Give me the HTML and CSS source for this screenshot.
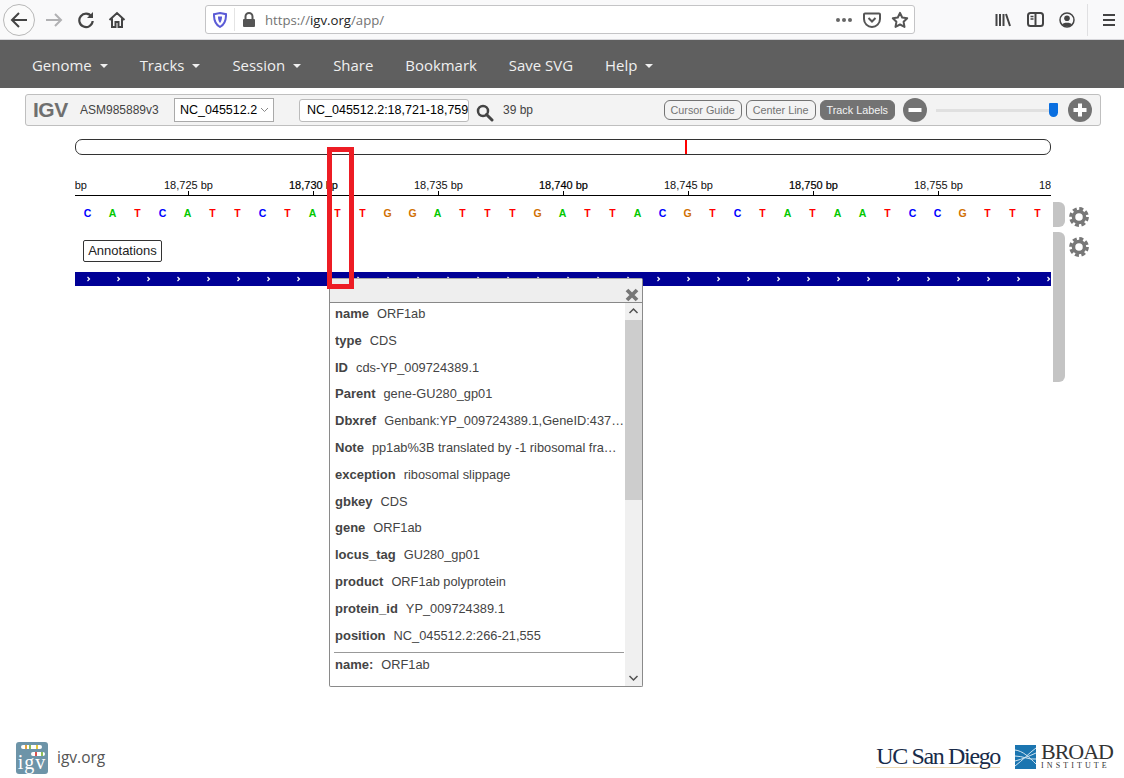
FILE: index.html
```html
<!DOCTYPE html>
<html lang="en">
<head>
    <meta charset="UTF-8">
    <meta name="viewport" content="width=device-width, initial-scale=1.0">
    <title>IGV-Web</title>
    <link rel="stylesheet" href="styles.css">
</head>
<body>
    <!-- browser chrome -->
    <div class="chrome">
        <div class="back-btn">
            <svg width="20" height="20" viewBox="0 0 20 20"><path d="M18 10H3M10 3l-7 7 7 7" fill="none" stroke="#444" stroke-width="2"/></svg>
        </div>
        <svg class="chrome-icon forward" width="18" height="18" viewBox="0 0 18 18"><path d="M1 9h15M10 3l6 6-6 6" fill="none" stroke="#b1b1b3" stroke-width="2"/></svg>
        <svg class="chrome-icon reload" width="18" height="18" viewBox="0 0 18 18"><path d="M14.5 5.5A6.7 6.7 0 1 0 15.7 10" fill="none" stroke="#444" stroke-width="2.2"/><path d="M16 1v6h-6z" fill="#444"/></svg>
        <svg class="chrome-icon home" width="18" height="18" viewBox="0 0 18 18"><path d="M1.5 9L9 2l7.500 7M4 7.500V16h3.500v-5h3v5H14V7.500" fill="none" stroke="#444" stroke-width="2"/></svg>
        <div class="urlbar">
            <svg class="shield" width="14" height="16" viewBox="0 0 14 16"><path d="M1 2.200L7 1l6 1.200c.2 6-1.500 10.300-6 12.800C2.500 12.500.8 8.200 1 2.200z" fill="none" stroke="#5b5bd6" stroke-width="2"/><path d="M5 4.500h4c0 3-.6 5-2 6.500-1.400-1.500-2-3.500-2-6.500z" fill="#5b5bd6"/></svg>
            <span class="url-sep"></span>
            <svg class="lock" width="14" height="16" viewBox="0 0 14 16"><path d="M3.500 7V4.500a3.500 3.500 0 0 1 7 0V7" fill="none" stroke="#555" stroke-width="2"/><rect x="1" y="7" width="12" height="8" rx="1" fill="#555"/></svg>
            <span class="url"><span class="url-dim">https://</span>igv.org<span class="url-dim">/app/</span></span>
            <span class="dots"><i></i><i></i><i></i></span>
            <svg class="pocket" width="18" height="16" viewBox="0 0 18 16"><path d="M2 1.500h14a1 1 0 0 1 1 1V7a8 8 0 0 1-16 0V2.500a1 1 0 0 1 1-1z" fill="none" stroke="#555" stroke-width="2"/><path d="M5.500 6L9 9.500 12.500 6" fill="none" stroke="#555" stroke-width="2"/></svg>
            <svg class="star" width="18" height="18" viewBox="0 0 18 18"><path d="M9 1.800l2.200 4.700 5 .7-3.600 3.600.9 5.100L9 13.500l-4.500 2.400.9-5.100L1.800 7.200l5-.7z" fill="none" stroke="#555" stroke-width="2" stroke-linejoin="round"/></svg>
        </div>
        <svg class="library" width="16" height="16" viewBox="0 0 16 16"><path d="M1.500 2v12M5 2v12M8.500 2v12M11 2l4 12" fill="none" stroke="#444" stroke-width="2"/></svg>
        <svg class="sidebar" width="17" height="15" viewBox="0 0 17 15"><rect x="1" y="1" width="15" height="13" rx="2.500" fill="none" stroke="#444" stroke-width="2"/><path d="M8.500 1v13" stroke="#444" stroke-width="2"/><path d="M3.500 4.500h3M3.500 7h3" stroke="#444" stroke-width="1.500"/></svg>
        <svg class="profile" width="16" height="16" viewBox="0 0 16 16"><circle cx="8" cy="8" r="7" fill="none" stroke="#444" stroke-width="1.500"/><circle cx="8" cy="6.200" r="2.800" fill="#444"/><path d="M3 12.500c1-2.500 9-2.500 10 0-2.500 2.500-7.500 2.500-10 0z" fill="#444"/></svg>
        <span class="chrome-sep"></span>
        <div class="hamburger"><i></i><i></i><i></i></div>
    </div>

    <!-- igv-webapp nav -->
    <nav class="navbar">
        <a class="nav-item caret">Genome</a>
        <a class="nav-item caret">Tracks</a>
        <a class="nav-item caret">Session</a>
        <a class="nav-item">Share</a>
        <a class="nav-item">Bookmark</a>
        <a class="nav-item">Save SVG</a>
        <a class="nav-item caret">Help</a>
    </nav>

    <main class="igv-main">
        <div class="igv-toolbar">
            <span class="igv-logo">IGV</span>
            <span class="genome-id">ASM985889v3</span>
            <div class="chrom-select"><span>NC_045512.2</span>
                <svg width="9" height="6" viewBox="0 0 9 6"><path d="M1 1l3.500 3.500L8 1" fill="none" stroke="#888" stroke-width="1"/></svg>
            </div>
            <div class="locus-input">NC_045512.2:18,721-18,759</div>
            <svg class="search" width="18" height="18" viewBox="0 0 18 18"><circle cx="7" cy="7" r="5" fill="none" stroke="#444" stroke-width="2.500"/><path d="M10.500 10.500L16 16" stroke="#444" stroke-width="3" stroke-linecap="round"/></svg>
            <span class="window-size">39 bp</span>
            <div class="toolbar-right">
                <button class="tb-btn">Cursor Guide</button>
                <button class="tb-btn">Center Line</button>
                <button class="tb-btn on">Track Labels</button>
                <svg class="zoom-btn" width="24" height="24" viewBox="0 0 24 24"><circle cx="12" cy="12" r="12" fill="#737373"/><path d="M5.500 12h13" stroke="#fff" stroke-width="4"/></svg>
                <div class="zoom-slider"><span class="zoom-thumb"></span></div>
                <svg class="zoom-btn" width="24" height="24" viewBox="0 0 24 24"><circle cx="12" cy="12" r="12" fill="#737373"/><path d="M5.500 12h13M12 5.500v13" stroke="#fff" stroke-width="4"/></svg>
            </div>
        </div>

        <div class="overview"><span class="overview-mark"></span></div>

        <svg class="ruler" width="976" height="22" viewBox="0 0 976 22">
            <g class="ruler-labels">
                <text x="-37" y="14">18,720 bp</text>
                <text x="89" y="14">18,725 bp</text>
                <text x="214" y="14" class="dark">18,730 bp</text>
                <text x="339" y="14">18,735 bp</text>
                <text x="464" y="14" class="dark">18,740 bp</text>
                <text x="589" y="14">18,745 bp</text>
                <text x="714" y="14" class="dark">18,750 bp</text>
                <text x="839" y="14">18,755 bp</text>
                <text x="964" y="14">18,760 bp</text>
            </g>
            <path d="M0 20.500H976M113.500 16v4M238.500 16v4M363.500 16v4M488.500 16v4M613.500 16v4M738.500 16v4M863.500 16v4" stroke="#000" fill="none"/>
        </svg>

        <div class="track-row seq-row">
            <div class="track-view seq">
                <b class="c">C</b><b class="a">A</b><b class="t">T</b><b class="c">C</b><b class="a">A</b><b class="t">T</b><b class="t">T</b><b class="c">C</b><b class="t">T</b><b class="a">A</b>
                <b class="t">T</b><b class="t">T</b><b class="g">G</b><b class="g">G</b><b class="a">A</b><b class="t">T</b><b class="t">T</b><b class="t">T</b><b class="g">G</b><b class="a">A</b>
                <b class="t">T</b><b class="t">T</b><b class="a">A</b><b class="c">C</b><b class="g">G</b><b class="t">T</b><b class="c">C</b><b class="t">T</b><b class="a">A</b><b class="t">T</b>
                <b class="a">A</b><b class="a">A</b><b class="t">T</b><b class="c">C</b><b class="c">C</b><b class="g">G</b><b class="t">T</b><b class="t">T</b><b class="t">T</b>
            </div>
            <div class="track-handle"></div>
            <svg class="gear" width="20" height="20" viewBox="0 0 20 20"><circle cx="10" cy="10" r="8.300" fill="none" stroke="#777" stroke-width="3.200" stroke-dasharray="4 2.520"/><circle cx="10" cy="10" r="5.500" fill="none" stroke="#777" stroke-width="3.500"/></svg>
        </div>

        <div class="track-row annot-row">
            <div class="track-view annot">
                <span class="track-label">Annotations</span>
                <svg class="feature" width="976" height="14" viewBox="0 0 976 14">
                    <defs>
                        <pattern id="chevrons" x="12" y="0" width="30" height="14" patternUnits="userSpaceOnUse">
                            <path d="M0.500 5l2 2-2 2" fill="none" stroke="#fff" stroke-width="1.200"/>
                        </pattern>
                    </defs>
                    <rect width="976" height="14" fill="#000096"/>
                    <rect width="976" height="14" fill="url(#chevrons)"/>
                </svg>
            </div>
            <div class="track-handle"></div>
            <svg class="gear" width="20" height="20" viewBox="0 0 20 20"><circle cx="10" cy="10" r="8.300" fill="none" stroke="#777" stroke-width="3.200" stroke-dasharray="4 2.520"/><circle cx="10" cy="10" r="5.500" fill="none" stroke="#777" stroke-width="3.500"/></svg>
        </div>

        <!-- feature popup -->
        <div class="popup">
            <div class="popup-head">
                <svg width="14" height="14" viewBox="0 0 14 14"><path d="M2 2l10 10M12 2L2 12" stroke="#777" stroke-width="3.800"/></svg>
            </div>
            <div class="popup-body">
                <div class="popup-list">
                    <div class="pop-row"><b>name</b>ORF1ab</div>
                    <div class="pop-row"><b>type</b>CDS</div>
                    <div class="pop-row"><b>ID</b>cds-YP_009724389.1</div>
                    <div class="pop-row"><b>Parent</b>gene-GU280_gp01</div>
                    <div class="pop-row"><b>Dbxref</b>Genbank:YP_009724389.1,GeneID:43740578</div>
                    <div class="pop-row"><b>Note</b>pp1ab%3B translated by -1 ribosomal frameshift</div>
                    <div class="pop-row"><b>exception</b>ribosomal slippage</div>
                    <div class="pop-row"><b>gbkey</b>CDS</div>
                    <div class="pop-row"><b>gene</b>ORF1ab</div>
                    <div class="pop-row"><b>locus_tag</b>GU280_gp01</div>
                    <div class="pop-row"><b>product</b>ORF1ab polyprotein</div>
                    <div class="pop-row"><b>protein_id</b>YP_009724389.1</div>
                    <div class="pop-row"><b>position</b>NC_045512.2:266-21,555</div>
                    <hr class="pop-rule">
                    <div class="pop-row"><b>name:</b>ORF1ab</div>
                    <div class="pop-row"><b>type:</b>CDS</div>
                </div>
                <div class="pop-scroll">
                    <svg class="pop-arrow" width="17" height="17" viewBox="0 0 17 17"><path d="M4.500 10l4-4 4 4" fill="none" stroke="#505050" stroke-width="1.500"/></svg>
                    <span class="pop-thumb"></span>
                    <svg class="pop-arrow end" width="17" height="17" viewBox="0 0 17 17"><path d="M4.500 7l4 4 4-4" fill="none" stroke="#505050" stroke-width="1.500"/></svg>
                </div>
            </div>
        </div>

        <!-- hand drawn highlight from the screenshot -->
        <div class="highlight"></div>
    </main>

    <footer class="footer">
        <div class="igv-link">
            <svg width="32" height="32" viewBox="0 0 32 32">
                <rect width="32" height="32" rx="3" fill="#6d94a8"/>
                <rect x="5" y="3" width="21" height="4" rx="2" fill="#fff"/>
                <rect x="9" y="3" width="2" height="4" fill="#e8a33d"/>
                <rect x="13" y="3" width="2" height="4" fill="#8fbf5a"/>
                <rect x="20" y="3" width="2" height="4" fill="#e6c93c"/>
                <rect x="15" y="10" width="14" height="4" rx="2" fill="#fff"/>
                <rect x="19" y="10" width="2" height="4" fill="#d9534f"/>
                <rect x="25" y="10" width="2" height="4" fill="#8fbf5a"/>
                <text x="16" y="27" text-anchor="middle" class="logo-igv">igv</text>
            </svg>
            <span>igv.org</span>
        </div>
        <div class="partners">
            <span class="ucsd">UC San Diego</span>
            <svg class="broad-mark" width="21" height="24" viewBox="0 0 21 24">
                <rect width="21" height="24" fill="#1b75b0"/>
                <path d="M0 5c8 1 14 7 21 14M0 11c8 0 14 4 21 3M0 16c8-2 14-5 21-8M0 21C8 15 14 8 21 3" fill="none" stroke="#cfe3f0" stroke-width="1"/>
            </svg>
            <div class="broad">
                <span class="broad-name">BROAD</span>
                <span class="broad-sub">INSTITUTE</span>
            </div>
        </div>
    </footer>
</body>
</html>
```

FILE: styles.css
```css
html, body {
    margin: 0;
    height: 778px;
    overflow: hidden;
}
body {
    display: flex;
    flex-direction: column;
    font-family: "Liberation Sans", Arial, sans-serif;
    background-color: #fff;
    color: #444;
}

/* browser chrome */
.chrome {
    display: flex;
    align-items: center;
    height: 39px;
    flex: none;
    background-color: #f9f9fa;
    border-bottom: 1px solid #d7d7db;
}
.back-btn {
    display: flex;
    align-items: center;
    justify-content: center;
    width: 32px;
    height: 32px;
    margin-left: 3px;
    border: 1px solid #b8b8b8;
    border-radius: 50%;
    background-color: #fbfbfb;
    box-sizing: border-box;
}
.chrome-icon {
    flex: none;
}
.forward {
    margin-left: 10px;
}
.reload {
    margin-left: 14px;
}
.home {
    margin-left: 13px;
}
.urlbar {
    display: flex;
    align-items: center;
    width: 710px;
    height: 29px;
    margin-left: 79px;
    box-sizing: border-box;
    background-color: #fff;
    border: 1px solid #c4c4c6;
    border-radius: 3px;
}
.shield {
    margin-left: 7px;
}
.url-sep {
    width: 1px;
    height: 23px;
    margin-left: 7px;
    background-color: #e4e4e4;
}
.lock {
    margin-left: 7px;
}
.url {
    margin-left: 9px;
    font-family: "Open Sans", sans-serif;
    font-size: 13.200px;
    color: #222;
    flex: 1;
}
.url-dim {
    color: #737373;
}
.dots {
    display: flex;
    gap: 2px;
}
.dots i {
    width: 4px;
    height: 4px;
    border-radius: 50%;
    background-color: #666;
}
.pocket {
    margin-left: 11px;
}
.star {
    margin-left: 10px;
    margin-right: 5px;
}
.library {
    margin-left: 80px;
}
.sidebar {
    margin-left: 16px;
}
.profile {
    margin-left: 15px;
}
.chrome-sep {
    width: 1px;
    height: 32px;
    margin-left: 12px;
    background-color: #e0e0e2;
}
.hamburger {
    display: flex;
    flex-direction: column;
    gap: 3px;
    margin-left: 15px;
}
.hamburger i {
    display: block;
    width: 12px;
    height: 2px;
    background-color: #444;
}

/* navbar */
.navbar {
    display: flex;
    align-items: center;
    gap: 32px;
    height: 46px;
    flex: none;
    padding: 2px 0 0 32px;
    background-color: #5f5f5f;
}
.nav-item {
    font-family: "Open Sans", sans-serif;
    font-size: 14.950px;
    color: #f0f0f0;
}
.caret::after {
    content: "";
    display: inline-block;
    margin-left: 8px;
    vertical-align: 3px;
    border-top: 4px solid #f0f0f0;
    border-left: 4px solid transparent;
    border-right: 4px solid transparent;
}

/* igv */
.igv-main {
    position: relative;
    flex: 1;
}
.igv-toolbar {
    display: flex;
    align-items: center;
    width: 1076px;
    height: 32px;
    margin: 6px 0 0 25px;
    padding-left: 7px;
    box-sizing: border-box;
    background-color: #f3f3f3;
    border: 1px solid #bfbfbf;
    border-radius: 3px;
}
.igv-logo {
    width: 47px;
    font-size: 21px;
    font-weight: bold;
    letter-spacing: -0.500px;
    color: #6f6f6f;
}
.genome-id {
    width: 94px;
    font-size: 12px;
    color: #444;
}
.chrom-select {
    display: flex;
    align-items: center;
    justify-content: space-between;
    width: 100px;
    height: 24px;
    padding: 0 4px 0 5px;
    box-sizing: border-box;
    background-color: #fff;
    border: 1px solid #a9a9a9;
    font-size: 12.500px;
    color: #000;
}
.locus-input {
    width: 170px;
    height: 23px;
    margin-left: 25px;
    padding-left: 7px;
    box-sizing: border-box;
    overflow: hidden;
    white-space: nowrap;
    background-color: #fff;
    border: 1px solid #bbb;
    border-radius: 3px;
    font-size: 12.500px;
    line-height: 21px;
    color: #000;
}
.search {
    margin: 5px 0 0 7px;
}
.window-size {
    margin-left: 9px;
    font-size: 12px;
    color: #444;
}
.toolbar-right {
    display: flex;
    align-items: center;
    margin-left: auto;
    margin-right: 8px;
}
.tb-btn {
    height: 20px;
    margin: 0 4px 0 0;
    padding: 0 6px;
    font-family: "Liberation Sans", Arial, sans-serif;
    font-size: 10.800px;
    color: #737373;
    background-color: #f3f3f3;
    border: 1px solid #737373;
    border-radius: 6px;
}
.tb-btn.on {
    color: #f3f3f3;
    background-color: #737373;
    margin-right: 8px;
}
.zoom-btn {
    flex: none;
}
.zoom-slider {
    position: relative;
    width: 122px;
    height: 3px;
    margin: 0 10px 0 9px;
    background-color: #e0e0e0;
}
.zoom-thumb {
    position: absolute;
    right: 0;
    top: -6px;
    width: 9px;
    height: 14px;
    background-color: #0a6fe0;
    border-radius: 1px 1px 5px 5px;
}

.overview {
    position: relative;
    width: 976px;
    height: 16px;
    margin: 13px 0 0 75px;
    box-sizing: border-box;
    background-color: #fff;
    border: 1px solid #333;
    border-radius: 7px;
}
.overview-mark {
    position: absolute;
    left: 609px;
    top: 0;
    width: 2px;
    height: 14px;
    background-color: #f00;
}
.ruler {
    display: block;
    margin: 20px 0 0 75px;
}
.ruler-labels text {
    font-size: 11px;
    fill: #111;
}
.ruler-labels .dark {
    fill: #000;
    stroke: #000;
    stroke-width: 0.200px;
}

.track-row {
    display: flex;
    margin-left: 75px;
}
.track-view {
    width: 976px;
    flex: none;
    overflow: hidden;
}
.track-handle {
    width: 12px;
    flex: none;
    margin-left: 2px;
    background-color: #c4c4c4;
    border-radius: 0 6px 6px 0;
}
.gear {
    margin: 5px 0 0 4px;
}
.seq-row {
    height: 25px;
    margin-top: 5px;
}
.annot-row {
    height: 150px;
    margin-top: 5px;
}
.seq {
    display: flex;
}
.seq b {
    width: 25px;
    flex: none;
    text-align: center;
    font-size: 10.500px;
    line-height: 22px;
}
.a { color: #00c800; }
.c { color: #0000ff; }
.g { color: #d17105; }
.t { color: #ff0000; }

.track-label {
    display: block;
    width: 79px;
    height: 22px;
    margin: 8px 0 0 8px;
    box-sizing: border-box;
    border: 1px solid #333;
    border-radius: 2px;
    background-color: #fff;
    font-size: 13px;
    line-height: 20px;
    text-align: center;
    color: #222;
}
.feature {
    display: block;
    margin-top: 10px;
}

/* popup */
.popup {
    position: absolute;
    left: 329px;
    top: 190px;
    width: 314px;
    height: 409px;
    box-sizing: border-box;
    display: flex;
    flex-direction: column;
    background-color: #fff;
    border: 1px solid #8a8a8a;
    border-top-color: #aaa;
    border-radius: 2px;
}
.popup-head {
    display: flex;
    justify-content: flex-end;
    align-items: flex-end;
    height: 23px;
    flex: none;
    padding-right: 3px;
    background-color: #eee;
    border-bottom: 1px solid #888;
}
.popup-body {
    display: flex;
    flex: 1;
    min-height: 0;
}
.popup-list {
    width: 295px;
    flex: none;
    overflow: hidden;
    padding: 1px 0 0 5px;
    box-sizing: border-box;
}
.pop-row {
    height: 26.800px;
    overflow: hidden;
    white-space: nowrap;
    text-overflow: ellipsis;
    width: 290px;
    font-size: 12.800px;
    line-height: 19px;
    color: #444;
}
.pop-row b {
    margin-right: 8px;
    font-size: 13px;
}
.pop-rule {
    width: 290px;
    height: 0;
    margin: 0 0 2px -1px;
    border: 0;
    border-top: 1px solid #999;
}
.pop-scroll {
    display: flex;
    flex-direction: column;
    width: 17px;
    flex: none;
    background-color: #f0f0f0;
}
.pop-thumb {
    display: block;
    height: 180px;
    background-color: #cdcdcd;
}
.pop-arrow.end {
    margin-top: auto;
}

.highlight {
    position: absolute;
    left: 327px;
    top: 59px;
    width: 27px;
    height: 142px;
    box-sizing: border-box;
    border: 5px solid #ed1c24;
}

/* footer */
.footer {
    display: flex;
    justify-content: space-between;
    align-items: center;
    height: 32px;
    flex: none;
    padding: 0 14px 4px 16px;
}
.igv-link {
    display: flex;
    align-items: center;
    gap: 9px;
    font-family: "Open Sans", sans-serif;
    font-size: 15.500px;
    color: #555;
}
.igv-link span {
    margin-top: -2px;
}
.logo-igv {
    font-family: "Liberation Serif", serif;
    font-size: 20px;
    letter-spacing: 1px;
    fill: #fff;
}
.partners {
    display: flex;
    align-items: center;
    margin-bottom: 3px;
}
.ucsd {
    font-family: "Liberation Serif", serif;
    font-size: 24px;
    letter-spacing: -1.350px;
    line-height: 22px;
    color: #182b49;
    border-bottom: 1px solid #ecd9b4;
}
.broad-mark {
    margin-left: 15px;
}
.broad {
    display: flex;
    flex-direction: column;
    width: 69px;
    margin-left: 5px;
    font-family: "Liberation Serif", serif;
    color: #333;
}
.broad-name {
    font-size: 22px;
    line-height: 17px;
    letter-spacing: -1px;
}
.broad-sub {
    margin-top: 2px;
    font-size: 8px;
    line-height: 8px;
    letter-spacing: 3.100px;
    white-space: nowrap;
}
```
